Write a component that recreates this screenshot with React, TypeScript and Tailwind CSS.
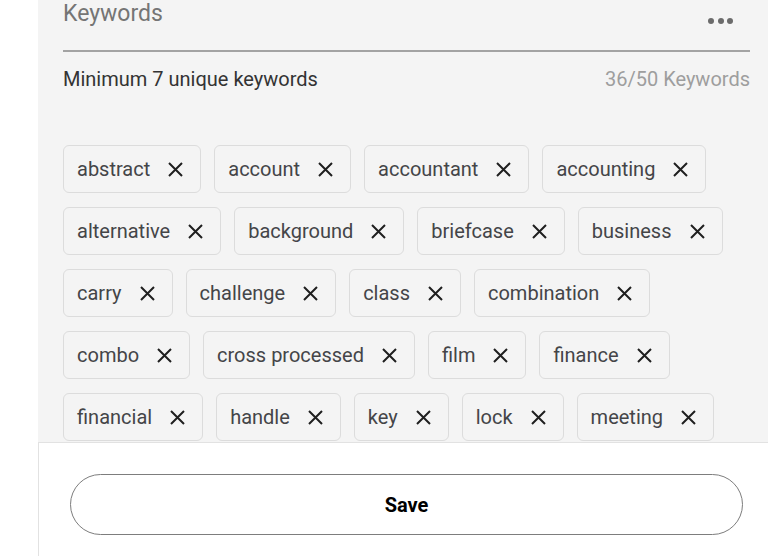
const keywords = [
  'abstract',
  'account',
  'accountant',
  'accounting',
  'alternative',
  'background',
  'briefcase',
  'business',
  'carry',
  'challenge',
  'class',
  'combination',
  'combo',
  'cross processed',
  'film',
  'finance',
  'financial',
  'handle',
  'key',
  'lock',
  'meeting',
];

function CloseIcon() {
  return (
    <svg viewBox="0 0 15 15" className="h-[15px] w-[15px] shrink-0 text-[#1f1f1f]" aria-hidden>
      <path d="M1 1L14 14M14 1L1 14" stroke="currentColor" strokeWidth={2} fill="none" />
    </svg>
  );
}

function Chip({ label }: { label: string }) {
  return (
    <span className="inline-flex h-[48px] items-center gap-[18px] rounded-[6px] border border-[#dcdcdc] bg-[#f4f4f4] pl-[13px] pr-[17px] text-[20px] leading-6 text-[#444548]">
      {label}
      <CloseIcon />
    </span>
  );
}

export default function App() {
  return (
    <div className="flex h-[556px] w-[768px] overflow-hidden bg-white font-['Roboto','Liberation_Sans',sans-serif]">
      <div className="w-[38px] shrink-0" />

      <div className="flex min-w-0 flex-1 flex-col bg-[#f4f4f4]">
        <div className="min-h-0 flex-1 overflow-hidden pl-[25px] pr-[18px]">
          {/* Header */}
          <div className="flex h-[52px] items-start justify-between border-b-2 border-[#a3a3a3]">
            <span className="text-[23px] leading-[27px] text-[#757575]">Keywords</span>
            <div className="mr-[17px] mt-[18px] flex gap-[3.5px]">
              <span className="h-[6px] w-[6px] rounded-full bg-[#6b6b6b]" />
              <span className="h-[6px] w-[6px] rounded-full bg-[#6b6b6b]" />
              <span className="h-[6px] w-[6px] rounded-full bg-[#6b6b6b]" />
            </div>
          </div>

          <div className="mt-[15px] flex items-center justify-between text-[20px] leading-6">
            <span className="text-[#333333]">Minimum 7 unique keywords</span>
            <span className="text-[#9e9e9e]">36/50 Keywords</span>
          </div>

          <div className="mt-[54px] flex flex-wrap gap-x-[13px] gap-y-[14px]">
            {keywords.map((k) => (
              <Chip key={k} label={k} />
            ))}
          </div>
        </div>

        {/* Footer */}
        <div className="h-[114px] shrink-0 border-l border-t border-[#e2e2e2] bg-white pl-[31px] pr-[25px] pt-[31px]">
          <button className="flex h-[61px] w-full items-center justify-center rounded-full border-[1.5px] border-[#7d7d7d] bg-white text-[20px] font-bold text-black">
            Save
          </button>
        </div>
      </div>
    </div>
  );
}
